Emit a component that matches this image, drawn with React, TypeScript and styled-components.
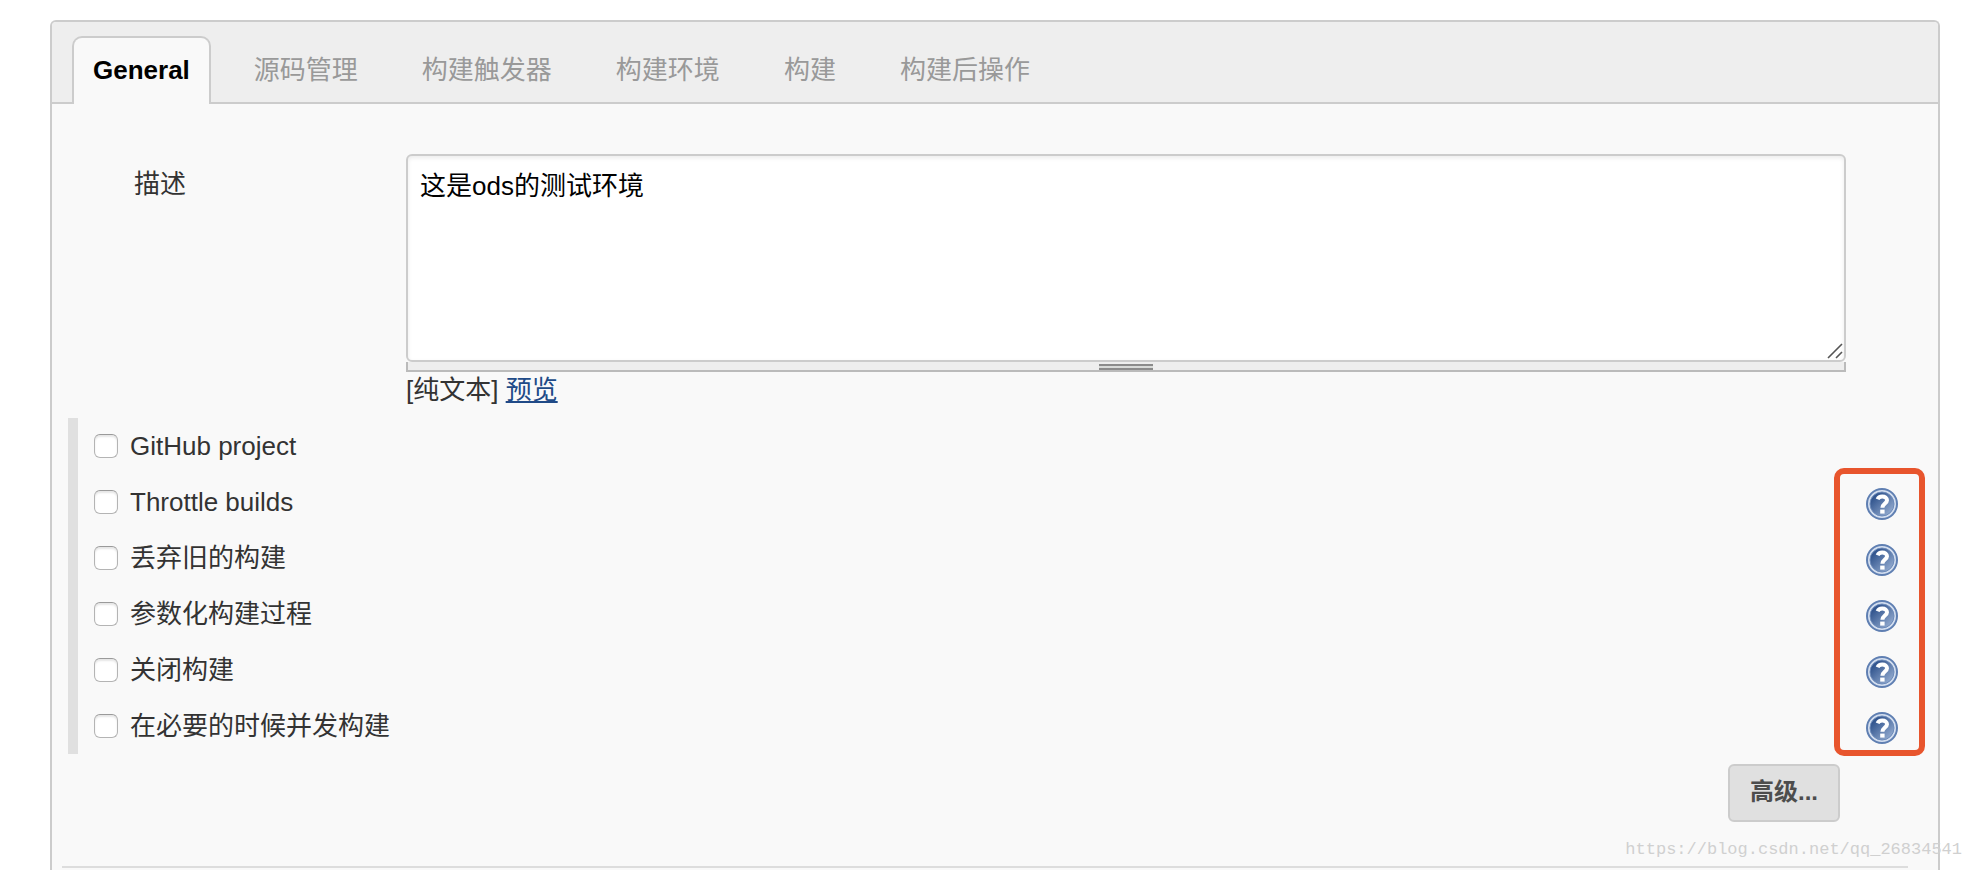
import React, { useId, useState } from 'react';
import styled, { createGlobalStyle } from 'styled-components';

const GlobalStyle = createGlobalStyle`
  *, *::before, *::after { box-sizing: border-box; }
  body {
    margin: 0;
    background: #fff;
    color: #333;
    font-family: "Liberation Sans", "Noto Sans CJK SC", sans-serif;
    font-size: 26px;
    line-height: 36px;
  }
  button, input, textarea { font: inherit; }
`;

const Page = styled.div`
  position: relative;
  display: flex;
  flex-direction: column;
  min-height: 100vh;
  padding: 20px 30px 0 50px;
`;

const Panel = styled.main`
  flex: 1;
  border: 2px solid #ccc;
  border-bottom: 0;
  border-radius: 6px 6px 0 0;
  background: #f9f9f9;
`;

const TabBar = styled.nav`
  display: flex;
  gap: 22px;
  padding: 14px 20px 0;
  border-bottom: 2px solid #ccc;
  border-radius: 4px 4px 0 0;
  background: #eee;
`;

const Tab = styled.button<{ $active: boolean }>`
  height: 68px;
  margin-bottom: -2px;
  padding: 0 19px 2px;
  border: 2px solid ${p => (p.$active ? '#ccc' : 'transparent')};
  border-bottom: 0;
  border-radius: 10px 10px 0 0;
  background: ${p => (p.$active ? '#f9f9f9' : 'transparent')};
  color: ${p => (p.$active ? '#000' : '#999')};
  font-weight: ${p => (p.$active ? 700 : 400)};
  cursor: pointer;
`;

const DescriptionRow = styled.div`
  display: grid;
  grid-template-columns: 272px 1fr;
  padding: 50px 92px 0 82px;
`;

const FieldLabel = styled.label`
  padding-top: 12px;
`;

const Editor = styled.div`
  position: relative;
`;

const TextBox = styled.textarea`
  display: block;
  width: 100%;
  height: 208px;
  padding: 12px;
  border: 2px solid #ccc;
  border-radius: 6px;
  background: #fff;
  box-shadow: inset 0 2px 4px rgba(0, 0, 0, 0.08);
  color: #000;
  resize: none;
  outline: 0;
`;

const CornerGrip = styled.svg`
  position: absolute;
  right: 3px;
  bottom: 13px;
  pointer-events: none;
`;

const ResizeHandle = styled.div`
  display: flex;
  justify-content: center;
  height: 10px;
  padding-top: 2px;
  border: solid #bbb;
  border-width: 0 2px 2px;
  background: #eee;
  cursor: row-resize;
`;

const HandleLines = styled.div`
  width: 54px;
  height: 6px;
  border: solid #8b8b8b;
  border-width: 2px 0;
  background: #d8dad8;
`;

const FormatLine = styled.div`
  height: 46px;
`;

const PreviewLink = styled.a`
  color: #204a87;
  text-decoration: underline;
`;

const Options = styled.section`
  position: relative;
  margin-left: 16px;
  border-left: 10px solid #e0e0e0;
`;

const OptionRow = styled.div`
  display: flex;
  align-items: center;
  justify-content: space-between;
  height: 56px;
  padding: 0 40px 0 16px;
`;

const OptionLabel = styled.label`
  display: flex;
  align-items: center;
  gap: 12px;
`;

const Checkbox = styled.input`
  appearance: none;
  width: 24px;
  height: 24px;
  margin: 0;
  border: 1px solid #b4b4b4;
  border-top-color: #9a9a9a;
  border-radius: 6px;
  background: #fff;
  box-shadow: inset 0 2px 2px rgba(0, 0, 0, 0.1);
  &:checked { background: #4a7fd0; }
`;

const HelpButton = styled.button`
  display: flex;
  padding: 4px 0 0;
  border: 0;
  background: none;
  cursor: pointer;
`;

const Highlight = styled.div`
  position: absolute;
  top: 50px;
  right: 13px;
  bottom: -2px;
  width: 91px;
  border: 6px solid #e8552d;
  border-radius: 10px;
  pointer-events: none;
`;

const Actions = styled.div`
  display: flex;
  justify-content: flex-end;
  padding: 10px 98px 44px;
`;

const AdvancedButton = styled.button`
  height: 58px;
  padding: 0 20px 2px;
  border: 2px solid #ccc;
  border-radius: 6px;
  background: #e0e0e0;
  color: #4d4d4d;
  font-size: 24px;
  font-weight: 700;
  cursor: pointer;
`;

const Divider = styled.hr`
  height: 2px;
  margin: 0 30px 0 10px;
  border: 0;
  background: #ddd;
`;

const Watermark = styled.div`
  position: absolute;
  right: 8px;
  bottom: 8px;
  color: #d0d0d0;
  font-family: "Liberation Mono", monospace;
  font-size: 17px;
  line-height: 24px;
`;

function HelpIcon() {
  const id = useId();
  return (
    <svg width="32" height="32" viewBox="0 0 32 32" aria-hidden="true">
      <defs>
        <linearGradient id={id} x1="0" y1="0" x2="1" y2="1">
          <stop offset="0.2" stopColor="#33568f" />
          <stop offset="1" stopColor="#a3b9da" />
        </linearGradient>
      </defs>
      <circle cx="16" cy="16" r="15" fill="#d3deef" stroke="#5f7fb2" strokeWidth="2" />
      <circle cx="16" cy="16" r="12" fill={`url(#${id})`} stroke="#6d8bba" strokeWidth="1" />
      <path
        d="M11.6 11.2C12.4 9.2 14 8.4 16.2 8.4C19 8.4 21 9.9 21 12.3C21 15.6 16.4 15.6 16.4 19.8"
        fill="none"
        stroke="#fff"
        strokeWidth="4"
      />
      <rect x="14.2" y="21.6" width="4.4" height="4" fill="#fff" />
    </svg>
  );
}

const tabs = ['General', '源码管理', '构建触发器', '构建环境', '构建', '构建后操作'];

const options = [
  { name: 'GitHub project', help: false },
  { name: 'Throttle builds', help: true },
  { name: '丢弃旧的构建', help: true },
  { name: '参数化构建过程', help: true },
  { name: '关闭构建', help: true },
  { name: '在必要的时候并发构建', help: true },
];

export default function App() {
  const [active, setActive] = useState('General');

  return (
    <Page>
      <GlobalStyle />
      <Panel>
        <TabBar>
          {tabs.map(tab => (
            <Tab key={tab} type="button" $active={tab === active} onClick={() => setActive(tab)}>
              {tab}
            </Tab>
          ))}
        </TabBar>

        <DescriptionRow>
          <FieldLabel htmlFor="description">描述</FieldLabel>
          <div>
            <Editor>
              <TextBox id="description" defaultValue="这是ods的测试环境" spellCheck={false} />
              <ResizeHandle>
                <HandleLines />
              </ResizeHandle>
              <CornerGrip width="16" height="16" viewBox="0 0 16 16" aria-hidden="true">
                <path d="M1 15L15 1M9 15L15 9" stroke="#555" strokeWidth="1.6" />
              </CornerGrip>
            </Editor>
            <FormatLine>
              [纯文本] <PreviewLink href="#preview">预览</PreviewLink>
            </FormatLine>
          </div>
        </DescriptionRow>

        <Options>
          {options.map(option => (
            <OptionRow key={option.name}>
              <OptionLabel>
                <Checkbox type="checkbox" />
                {option.name}
              </OptionLabel>
              {option.help && (
                <HelpButton type="button" aria-label={`帮助 ${option.name}`}>
                  <HelpIcon />
                </HelpButton>
              )}
            </OptionRow>
          ))}
          <Highlight />
        </Options>

        <Actions>
          <AdvancedButton type="button">高级...</AdvancedButton>
        </Actions>
        <Divider />
      </Panel>
      <Watermark>https://blog.csdn.net/qq_26834541</Watermark>
    </Page>
  );
}
